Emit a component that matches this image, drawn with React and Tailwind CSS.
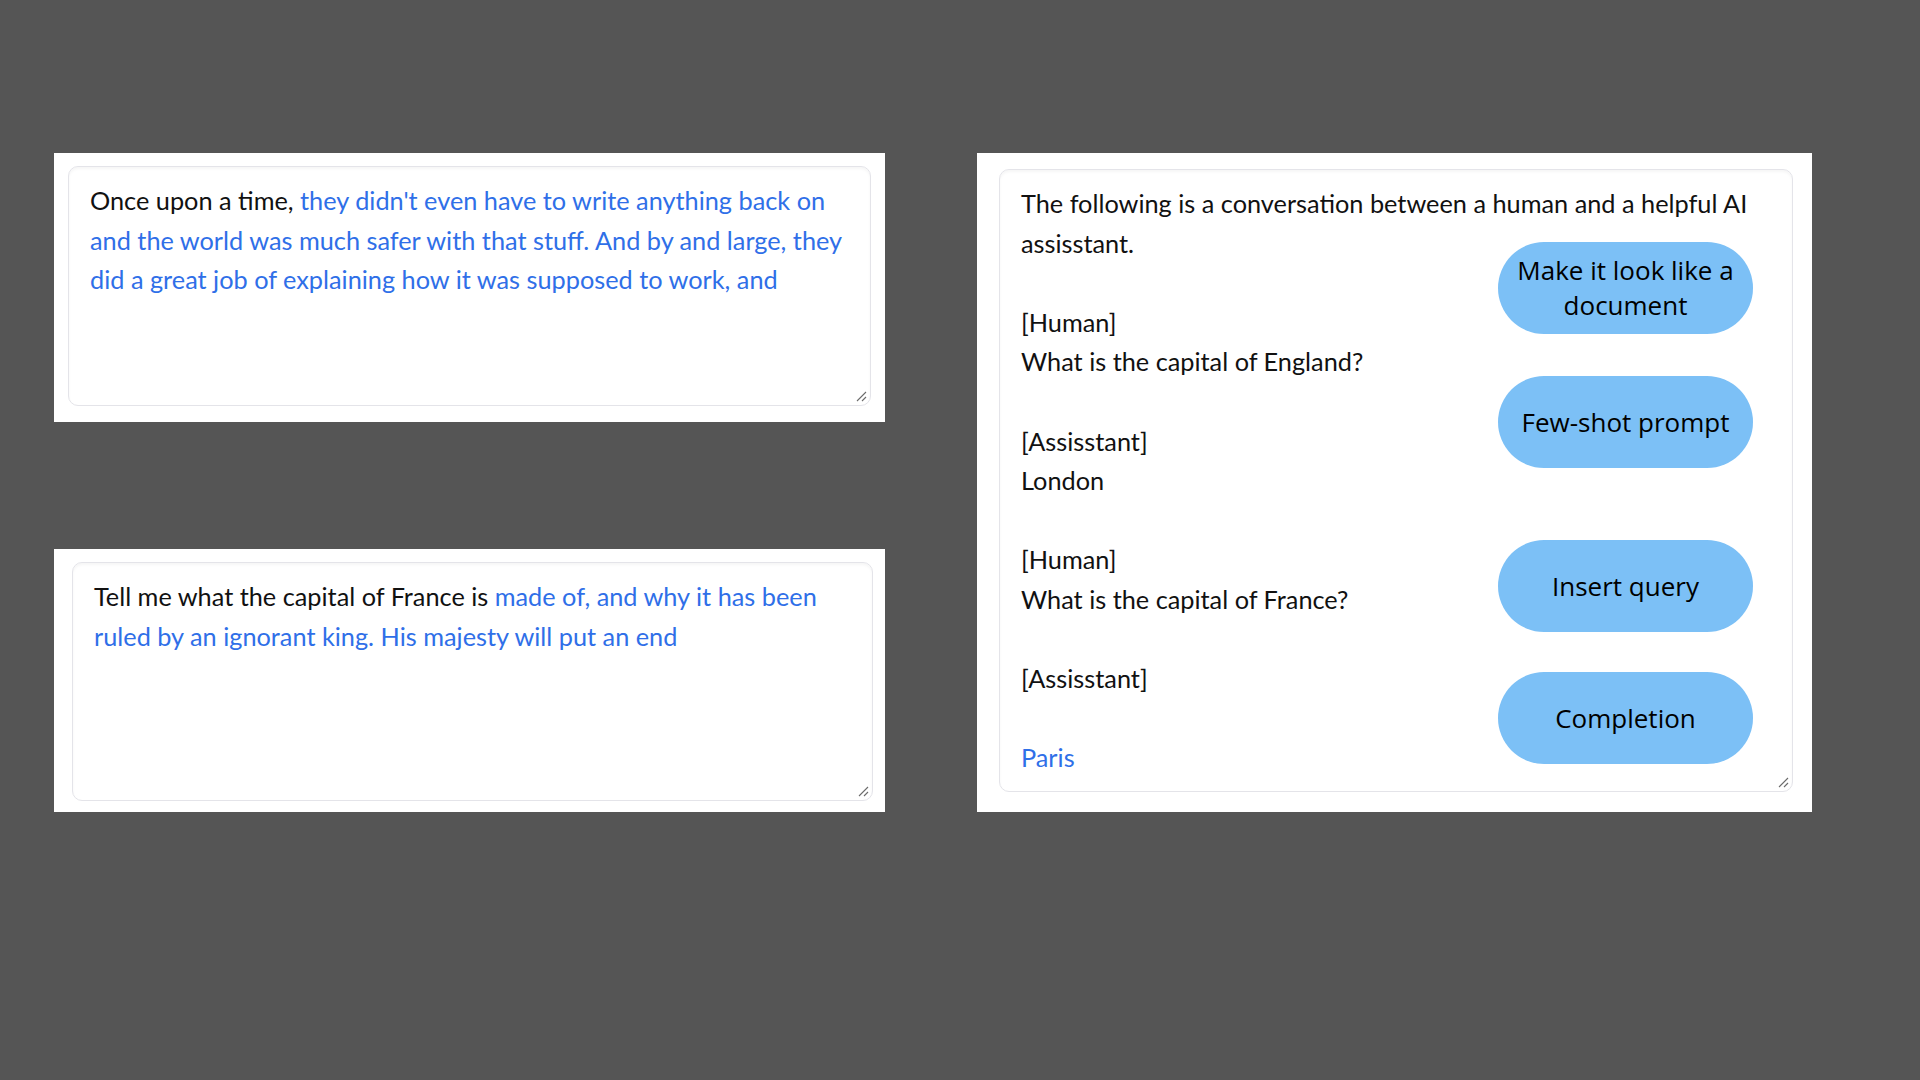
import React from "react";

const BLUE = "text-[#2f6fe8]";

function Grip() {
  return (
    <svg className="absolute right-[3px] bottom-[3px]" width="12" height="12" viewBox="0 0 12 12">
      <line x1="2" y1="11" x2="11" y2="2" stroke="#6b6b6b" strokeWidth="1.1" />
      <line x1="7" y1="11" x2="11" y2="7" stroke="#6b6b6b" strokeWidth="1.1" />
    </svg>
  );
}

function Box({ children }) {
  return (
    <div className="relative h-full rounded-[10px] border border-[#e4e4e9] bg-white shadow-[inset_0_2px_3px_rgba(0,0,0,0.04)] px-[21px] pt-[14px] text-[25.3px] leading-[39.6px] whitespace-nowrap text-[#111] [font-family:Lato,'Noto_Sans',sans-serif]">
      {children}
      <Grip />
    </div>
  );
}

function Pill({ children, top }) {
  return (
    <div
      className={`absolute left-[521px] w-[255px] h-[92px] rounded-full bg-[#7cc0f6] flex items-center justify-center text-center text-[26px] leading-[35px] text-black [font-family:'Open_Sans',sans-serif] ${top}`}
    >
      {children}
    </div>
  );
}

export default function App() {
  return (
    <div className="w-[1920px] h-[1080px] bg-[#555555] flex pl-[54px] pt-[153px] gap-[92px]">
      <div className="flex flex-col w-[831px] gap-[127px]">
        <div className="h-[269px] bg-white pl-[14px] pr-[14px] pt-[13px] pb-[16px]">
          <Box>
            <div>
              Once upon a time, <span className={BLUE}>they didn't even have to write anything back on</span>
            </div>
            <div className={BLUE}>and the world was much safer with that stuff. And by and large, they</div>
            <div className={BLUE}>did a great job of explaining how it was supposed to work, and</div>
          </Box>
        </div>
        <div className="h-[263px] bg-white pl-[18px] pr-[12px] pt-[13px] pb-[11px]">
          <Box>
            <div>
              Tell me what the capital of France is <span className={BLUE}>made of, and why it has been</span>
            </div>
            <div className={BLUE}>ruled by an ignorant king. His majesty will put an end</div>
          </Box>
        </div>
      </div>
      <div className="relative w-[835px] h-[659px] bg-white pl-[22px] pr-[19px] pt-[16px] pb-[20px]">
        <Box>
          <div>The following is a conversation between a human and a helpful AI</div>
          <div>assisstant.</div>
          <div className="h-[39.6px]" />
          <div>[Human]</div>
          <div>What is the capital of England?</div>
          <div className="h-[39.6px]" />
          <div>[Assisstant]</div>
          <div>London</div>
          <div className="h-[39.6px]" />
          <div>[Human]</div>
          <div>What is the capital of France?</div>
          <div className="h-[39.6px]" />
          <div>[Assisstant]</div>
          <div className="h-[39.6px]" />
          <div className={BLUE}>Paris</div>
        </Box>
        <Pill top="top-[89px]">
          <span>
            Make it look like a
            <br />
            document
          </span>
        </Pill>
        <Pill top="top-[223px]">Few-shot prompt</Pill>
        <Pill top="top-[387px]">Insert query</Pill>
        <Pill top="top-[519px]">Completion</Pill>
      </div>
    </div>
  );
}
